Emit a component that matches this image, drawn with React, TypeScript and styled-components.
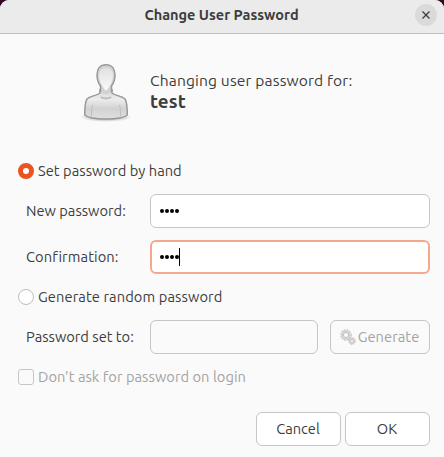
import React from "react";
import styled, { createGlobalStyle, css } from "styled-components";

const GlobalStyle = createGlobalStyle`
  *, *::before, *::after { box-sizing: border-box; }
  body { margin: 0; background: #300a24; font-family: Ubuntu, "Noto Sans", sans-serif; }
  button, input { font: inherit; margin: 0; }
`;

const Window = styled.main`
  width: 444px;
  height: 457px;
  overflow: hidden;
  display: flex;
  flex-direction: column;
  background: #fafafa;
  border-radius: 9px 9px 0 0;
  color: #3d3d3d;
  font-size: 14.67px;
  line-height: 20px;
  white-space: nowrap;
`;

const Header = styled.header`
  flex: none;
  height: 34px;
  display: grid;
  grid-template-columns: 30px 1fr 30px;
  align-items: start;
  background: #ebebeb;
  border-bottom: 1px solid #bfbfbf;
`;

const Title = styled.h1`
  grid-column: 2;
  margin: 5px 1px 0 0;
  text-align: center;
  font-size: 14.5px;
  font-weight: 600;
  line-height: 20px;
`;

const CloseButton = styled.button`
  width: 22px;
  height: 22px;
  margin: 4px 0 0 1px;
  padding: 0;
  display: grid;
  place-items: center;
  border: 0;
  border-radius: 50%;
  background: #dadada;
`;

const Text = styled.span<{ $track?: number }>`
  letter-spacing: ${({ $track = 0 }) => $track}px;
`;

const Intro = styled.section`
  display: flex;
  height: 128px;
  padding: 27px 0 0 74px;
  gap: 12px;
`;

const IntroCopy = styled.div`
  padding-top: 8px;
`;

const IntroLine = styled.p`
  margin: 0;
  font-size: 15.6px;
  line-height: 22px;
`;

const UserName = styled.p`
  margin: 0;
  font-size: 18.7px;
  line-height: 22px;
  font-weight: 600;
`;

const OptionRow = styled.label<{ $muted?: boolean }>`
  height: 18px;
  margin-left: 18px;
  display: flex;
  align-items: center;
  gap: 4px;
  color: ${({ $muted }) => ($muted ? "#a3a3a3" : "inherit")};
`;

const Radio = styled.span<{ $checked?: boolean }>`
  width: 16px;
  height: 16px;
  border-radius: 50%;
  border: 1px solid #bcbcbc;
  background: #fff;
  ${({ $checked }) => $checked && css`border: 5.5px solid #e95420;`}
`;

const Checkbox = styled.span`
  width: 16px;
  height: 16px;
  border: 1px solid #c6c6c6;
  border-radius: 3px;
`;

const FieldRow = styled.div`
  height: 34px;
  padding: 0 14px 0 26px;
  display: grid;
  grid-template-columns: 124px 1fr auto;
  align-items: center;
`;

const Field = styled.div<{ $focused?: boolean; $disabled?: boolean }>`
  height: 34px;
  padding-left: ${({ $focused }) => ($focused ? 7 : 8)}px;
  display: flex;
  align-items: center;
  border: ${({ $focused }) => ($focused ? "2px solid #f6a88f" : "1px solid #c6c6c6")};
  border-radius: 6px;
  background: ${({ $disabled }) => ($disabled ? "#fafafa" : "#fff")};
`;

const Dots = styled.svg`
  width: 20px;
  height: 6px;
  fill: #000;
`;

const Caret = styled.span`
  width: 1px;
  height: 18px;
  background: #000;
  margin-top: -1px;
`;

const Button = styled.button<{ $disabled?: boolean }>`
  width: 85px;
  height: 34px;
  padding: 0 1px 0 0;
  display: flex;
  align-items: center;
  justify-content: center;
  border: 1px solid #c6c6c6;
  border-radius: 6px;
  background: #fff;
  color: inherit;
  ${({ $disabled }) => $disabled && css`
    width: 100px;
    margin-left: 12px;
    gap: 2px;
    background: #fafafa;
    color: #a3a3a3;
  `}
`;

const Form = styled.form`
  display: flex;
  flex-direction: column;
`;

const Fields = styled.div`
  display: grid;
  gap: 12px;
  margin: 14px 0;
`;

const Actions = styled.footer`
  margin: auto 14px 11px;
  display: flex;
  justify-content: flex-end;
  gap: 4px;
`;

function PasswordDots() {
  return (
    <Dots viewBox="0 0 20 6" aria-label="4 hidden characters">
      {[3, 8, 13, 18].map((x) => <circle key={x} cx={x} cy="3" r="2" />)}
    </Dots>
  );
}

function UserIcon() {
  return (
    <svg width="64" height="64" viewBox="0 0 64 64">
      <defs>
        <linearGradient id="body" x1="0" y1="0" x2="0" y2="1">
          <stop stopColor="#d4d4d4" />
          <stop offset=".35" stopColor="#ececec" />
          <stop offset=".65" stopColor="#d2d2d2" />
          <stop offset="1" stopColor="#dfdfdf" />
        </linearGradient>
        <linearGradient id="face" x1="0" y1="0" x2="0" y2="1">
          <stop stopColor="#e1e1e1" />
          <stop offset="1" stopColor="#fafafa" />
        </linearGradient>
        <radialGradient id="shadow">
          <stop offset=".5" stopColor="#aaa" stopOpacity=".7" />
          <stop offset="1" stopColor="#aaa" stopOpacity="0" />
        </radialGradient>
      </defs>
      <ellipse cx="32" cy="56" rx="26" ry="5" fill="url(#shadow)" />
      <path d="M26 28v4c-4 3-10 3-13 6-2 3-2.300 9-2.300 16C14 57 24 58 32 58s18-1 21.300-4c0-7-.3-13-2.300-16-3-3-9-3-13-6v-4" fill="url(#body)" stroke="#999" strokeWidth="1.500" />
      <path d="M27 36c2 2 8 2 10 0" fill="none" stroke="#bebebe" strokeWidth="2" />
      <path d="M18.500 44c-1 3-1 7-1 11M45.500 44c1 3 1 7 1 11" fill="none" stroke="#bdbdbd" />
      <path d="M32 3.800c-5.800 0-9 4-9 10 0 4.500 1.200 8 3.500 11v5c2 4.500 9 4.500 11 0v-5c2.300-3 3.500-6.500 3.500-11 0-6-3.200-10-9-10z" fill="#d2d2d2" />
      <path d="M26.500 31v-6c-2.300-3-3.500-6.700-3.500-11 0-6.200 3.200-10.200 9-10.200s9 4 9 10.200c0 4.300-1.200 8-3.500 11v6" fill="none" stroke="#999" strokeWidth="1.500" />
      <path d="M32 7c-5 0-7 3-7 7.500 0 6 4 12.700 7 15.200 3-2.500 7-9.200 7-15.200C39 10 37 7 32 7z" fill="url(#face)" />
    </svg>
  );
}

function GearsIcon() {
  return (
    <svg width="16" height="16" viewBox="0 0 16 16" fill="none" stroke="#bdbdba">
      <circle cx="6" cy="6" r="5.200" strokeWidth="1.100" strokeDasharray="1.700 1.020" />
      <circle cx="6" cy="6" r="3.900" stroke="#d3d3d0" strokeWidth="2" />
      <circle cx="6" cy="6" r="2.600" stroke="#b8b8b5" strokeWidth=".9" fill="#fafafa" />
      <circle cx="12" cy="12" r="3.400" strokeWidth="1" strokeDasharray="1.500 1.170" />
      <circle cx="12" cy="12" r="2.500" stroke="#cfcfcc" strokeWidth="1.300" />
      <circle cx="12" cy="12" r="1.500" strokeWidth=".8" fill="#fafafa" />
    </svg>
  );
}

export default function App() {
  return (
    <>
      <GlobalStyle />
      <Window>
        <Header>
          <Title><Text>Change User Password</Text></Title>
          <CloseButton aria-label="Close">
            <svg width="8" height="8" viewBox="0 0 8 8" stroke="#3d3d3d" strokeWidth="1.300">
              <path d="M.5.5l7 7m0-7l-7 7" />
            </svg>
          </CloseButton>
        </Header>
        <Intro>
          <UserIcon />
          <IntroCopy>
            <IntroLine><Text $track={0.14}>Changing user password for:</Text></IntroLine>
            <UserName><Text $track={0.1}>test</Text></UserName>
          </IntroCopy>
        </Intro>
        <Form>
          <OptionRow><Radio $checked /><Text $track={0.04}>Set password by hand</Text></OptionRow>
          <Fields>
            <FieldRow><Text>New password:</Text><Field><PasswordDots /></Field></FieldRow>
            <FieldRow><Text $track={0.1}>Confirmation:</Text><Field $focused><PasswordDots /><Caret /></Field></FieldRow>
          </Fields>
          <OptionRow><Radio /><Text $track={0.1}>Generate random password</Text></OptionRow>
          <Fields>
            <FieldRow>
              <Text>Password set to:</Text>
              <Field $disabled />
              <Button type="button" $disabled><GearsIcon /><Text $track={0.06}>Generate</Text></Button>
            </FieldRow>
          </Fields>
          <OptionRow $muted><Checkbox /><Text $track={0.04}>Don't ask for password on login</Text></OptionRow>
        </Form>
        <Actions>
          <Button><Text>Cancel</Text></Button>
          <Button><Text>OK</Text></Button>
        </Actions>
      </Window>
    </>
  );
}
